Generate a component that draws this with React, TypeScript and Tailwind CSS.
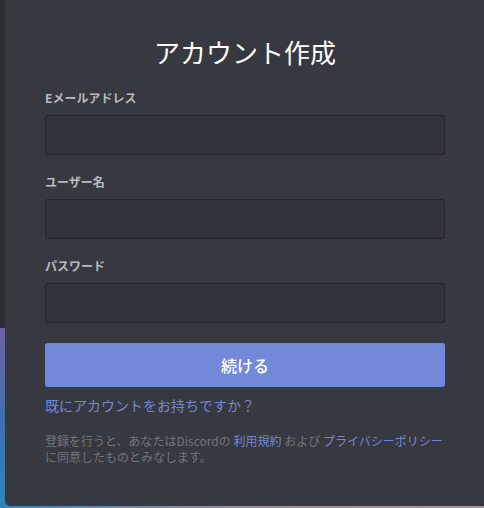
import { useState } from "react";

const jp = "font-['Noto_Sans_CJK_JP','Noto_Sans',sans-serif]";

interface FieldProps {
  label: string;
  type?: string;
  value: string;
  onChange: (v: string) => void;
  className?: string;
}

function Field({ label, type = "text", value, onChange, className = "" }: FieldProps) {
  return (
    <div className={"flex flex-col " + className}>
      <label className="text-[12px] leading-[16px] font-bold text-[#b9bbbe] mb-[9px]">
        {label}
      </label>
      <input
        type={type}
        value={value}
        onChange={(e) => onChange(e.target.value)}
        className="h-[40px] w-full rounded-[3px] border border-[#222428] bg-[#303339] px-[10px] text-[16px] text-[#dcddde] outline-none"
      />
    </div>
  );
}

export default function App() {
  const [email, setEmail] = useState("");
  const [username, setUsername] = useState("");
  const [password, setPassword] = useState("");

  return (
    <div className={"relative h-[508px] w-full overflow-hidden bg-[#2b2d31] " + jp}>
      {/* background artwork peeking out behind the modal */}
      <div className="absolute left-0 top-[328px] h-[180px] w-[40px] bg-gradient-to-b from-[#6b62a6] via-[#3d6fae] to-[#2a86b8]" />
      <div className="absolute bottom-0 left-0 h-[2px] w-full bg-gradient-to-r from-[#2a86b8] via-[#9a8b98] to-[#a6979f]" />

      <div className="relative ml-[5px] flex h-[506px] w-[480px] flex-col rounded-b-[5px] bg-[#36393f] px-[40px] pt-[37px]">
        <h1 className="text-center text-[26px] leading-[30px] font-normal text-white">
          アカウント作成
        </h1>

        <Field label="Eメールアドレス" type="email" value={email} onChange={setEmail} className="mt-[23px]" />
        <Field label="ユーザー名" value={username} onChange={setUsername} className="mt-[19px]" />
        <Field label="パスワード" type="password" value={password} onChange={setPassword} className="mt-[19px]" />

        <button className="mt-[20px] h-[44px] w-full rounded-[3px] bg-[#7289da] text-[16px] font-medium text-white">
          続ける
        </button>

        <a className="mt-[10px] self-start text-[14px] leading-[16px] text-[#7289da]">
          既にアカウントをお持ちですか？
        </a>

        <p className="mt-[20px] whitespace-nowrap text-[12px] leading-[16px] text-[#72767d]">
          登録を行うと、あなたはDiscordの <a className="text-[#7289da]">利用規約</a> および{" "}
          <a className="text-[#7289da]">プライバシーポリシー</a>
          <br />
          に同意したものとみなします。
        </p>
      </div>
    </div>
  );
}
